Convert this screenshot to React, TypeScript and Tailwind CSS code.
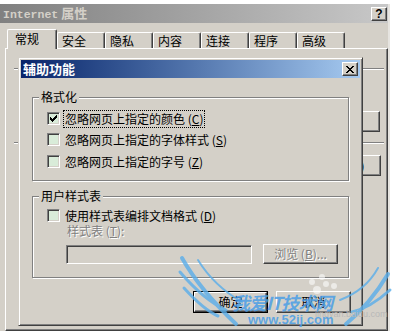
import React from "react";

// classic 3D frames
const RAISED =
  "border border-t-white border-l-white border-r-[#404040] border-b-[#404040] shadow-[inset_-1px_-1px_#808080]";
const SUNKEN =
  "border border-t-[#808080] border-l-[#808080] border-r-white border-b-white shadow-[inset_1px_1px_#404040,inset_-1px_-1px_#d4d0c8]";
const ETCHED = "border border-[#808080] shadow-[inset_1px_1px_#fff,1px_1px_#fff]";
const DISABLED = "text-[#808080] [text-shadow:1px_1px_0_#fff]";

const CHECK = ["......#", ".....##", "#...###", "##.###.", "#####..", ".###...", "..#...."];

function CheckBox({ checked }: { checked?: boolean }) {
  return (
    <span className={`flex h-[13px] w-[13px] shrink-0 items-center justify-center bg-[#d9ecd9] ${SUNKEN}`}>
      {checked && (
        <svg width="7" height="7" viewBox="0 0 7 7" shapeRendering="crispEdges">
          {CHECK.flatMap((row, y) =>
            row.split("").map((c, x) =>
              c === "#" ? <rect key={`${x}-${y}`} x={x} y={y} width="1" height="1" fill="#000" /> : null,
            ),
          )}
        </svg>
      )}
    </span>
  );
}

function Key({ k }: { k: string }) {
  return (
    <>
      (<span className="underline underline-offset-[1px]">{k}</span>)
    </>
  );
}

function Row({ checked, focus, children, className = "" }: { checked?: boolean; focus?: boolean; children: React.ReactNode; className?: string }) {
  return (
    <div className={`flex h-[13px] items-center gap-[5px] ${className}`}>
      <CheckBox checked={checked} />
      <span
        className={`whitespace-nowrap leading-[14px] ${focus ? "outline-1 outline-dotted outline-black outline-offset-[1px]" : ""}`}
      >
        {children}
      </span>
    </div>
  );
}

function Group({ label, className, children }: { label: string; className: string; children: React.ReactNode }) {
  return (
    <div className={`relative ${ETCHED} ${className}`}>
      <span className="absolute -top-[8px] left-[6px] bg-[#d4d0c8] px-[2px] leading-[14px]">{label}</span>
      {children}
    </div>
  );
}

function Watermark() {
  return (
    <div className="pointer-events-none absolute left-[170px] top-[250px] h-[84px] w-[226px]">
      <svg width="226" height="84" viewBox="0 0 226 84" className="absolute left-0 top-0 opacity-80">
        <g fill="none" stroke="#5aaeea" strokeLinecap="round">
          <path d="M12 8 Q30 40 66 74" strokeWidth="4" />
          <path d="M10 22 Q34 50 56 60" strokeWidth="3" />
          <path d="M14 38 Q34 60 48 66" strokeWidth="3" />
          <path d="M28 10 Q44 36 72 52" strokeWidth="2" />
          <path d="M218 24 Q200 54 176 74" strokeWidth="4" />
          <path d="M220 40 Q200 58 182 62" strokeWidth="3" />
          <path d="M208 18 Q196 40 170 50" strokeWidth="2" />
        </g>
        <g fill="#ffffff" opacity="0.7">
          <circle cx="147" cy="40" r="4" />
          <circle cx="156" cy="34" r="3" />
          <circle cx="164" cy="36" r="3" />
          <circle cx="142" cy="32" r="3" />
          <circle cx="152" cy="27" r="3" />
        </g>
      </svg>
      <span className="absolute left-[62px] top-[41px] whitespace-nowrap text-[18px] font-bold italic leading-[22px] tracking-[-1px] text-[#4a9ee6]/85">
        我爱IT技术网
      </span>
      <span className="absolute left-[145px] top-[59px] whitespace-nowrap font-['Liberation_Sans',sans-serif] text-[9px] leading-[10px] text-[#b8b8b8]">
        jingyan.baidu.com
      </span>
      <span className="absolute left-[78px] top-[63px] whitespace-nowrap font-['Liberation_Sans',sans-serif] text-[13px] font-bold leading-[14px] text-[#4a9ee6]/85">
        www.52ij.com
      </span>
    </div>
  );
}

function Dialog() {
  return (
    <div
      className={`absolute left-[18px] top-[57px] flex h-[269px] w-[345px] flex-col border border-t-[#d4d0c8] border-l-[#d4d0c8] border-r-[#404040] border-b-[#404040] bg-[#d4d0c8] p-[2px] shadow-[inset_1px_1px_#fff,inset_-1px_-1px_#808080]`}
    >
      <div className="flex h-[18px] shrink-0 items-center justify-between bg-linear-to-r from-[#0a246a] to-[#a6caf0] pl-[2px] pr-[2px]">
        <span className="text-[13px] font-bold leading-[14px] text-white">辅助功能</span>
        <span className={`flex h-[14px] w-[16px] items-center justify-center bg-[#d4d0c8] ${RAISED}`}>
          <svg width="8" height="7" viewBox="0 0 8 7" shapeRendering="crispEdges">
            <path d="M0 0h2v1h-2zM6 0h2v1h-2zM1 1h2v1h-2zM5 1h2v1h-2zM2 2h4v1h-4zM3 3h2v1h-2zM2 4h4v1h-4zM1 5h2v1h-2zM5 5h2v1h-2zM0 6h2v1h-2zM6 6h2v1h-2z" fill="#000" />
          </svg>
        </span>
      </div>

      <div className="flex flex-col px-[11px] pt-[19px]">
        <Group label="格式化" className="h-[84px] pl-[14px] pt-[14px]">
          <Row checked focus>
            忽略网页上指定的颜色 <Key k="C" />
          </Row>
          <Row className="mt-[8px]">
            忽略网页上指定的字体样式 <Key k="S" />
          </Row>
          <Row className="mt-[9px]">
            忽略网页上指定的字号 <Key k="Z" />
          </Row>
        </Group>

        <Group label="用户样式表" className="mt-[15px] h-[82px] pl-[14px] pt-[12px]">
          <Row>
            使用样式表编排文档格式 <Key k="D" />
          </Row>
          <div className={`mt-[2px] pl-[20px] leading-[14px] ${DISABLED}`}>
            样式表 <Key k="T" />:
          </div>
          <div className="mt-[6px] flex items-start pl-[19px]">
            <div className={`mt-[1px] h-[19px] w-[186px] bg-[#d4d0c8] ${SUNKEN}`} />
            <div className={`ml-[11px] flex h-[20px] w-[75px] items-center justify-center leading-[14px] ${RAISED} ${DISABLED}`}>
              浏览 <Key k="B" />...
            </div>
          </div>
        </Group>

        <div className="-mr-[2px] mt-[13px] flex justify-end gap-[8px]">
          <div className="h-[22px] w-[75px] border border-black">
            <div className={`flex h-full w-full items-center justify-center leading-[14px] ${RAISED}`}>确定</div>
          </div>
          <div className={`flex h-[22px] w-[75px] items-center justify-center leading-[14px] ${RAISED}`}>取消</div>
        </div>
      </div>
    </div>
  );
}

const TABS = ["安全", "隐私", "内容", "连接", "程序", "高级"];

export default function App() {
  return (
    <div className="relative h-[334px] w-[396px] overflow-hidden bg-white font-['Noto_Sans_CJK_SC',sans-serif] text-[12px] text-black">
      <div className="pt-[4px]">
        <div className="h-[327px] w-[390px] border-r-2 border-r-[#e6e4e0] bg-[#d4d0c8]">
          {/* title bar */}
          <div className="flex h-[19px] items-center justify-between bg-linear-to-r from-[#808080] to-[#c8c8c8] pl-[3px] pr-[1px]">
            <span className="whitespace-nowrap text-[13px] font-bold leading-[14px] text-[#d4d0c8]">
              <span className="font-['Liberation_Mono',monospace] text-[11.5px]">Internet</span> 属性
            </span>
            <span className={`flex h-[14px] w-[16px] items-center justify-center bg-[#d4d0c8] font-['Liberation_Sans',sans-serif] text-[12px] font-bold leading-none ${RAISED}`}>
              ?
            </span>
          </div>

          {/* tabs */}
          <div className="mt-[6px] flex h-[19px] items-end pl-[7px]">
            <div className="relative z-10 -mb-[1px] h-[20px] w-[50px] rounded-t-[2px] border-l border-t border-r border-l-white border-t-white border-r-[#404040] bg-[#d4d0c8] pl-[7px] pt-[2px] leading-[14px] shadow-[inset_-1px_0_#808080]">
              常规
            </div>
            {TABS.map((t) => (
              <div
                key={t}
                className="h-[16px] w-[48px] rounded-t-[2px] border-l border-t border-r border-l-white border-t-white border-r-[#404040] pl-[4px] pt-[1px] leading-[14px] shadow-[inset_-1px_0_#808080]"
              >
                {t}
              </div>
            ))}
          </div>

          {/* tab page (mostly hidden under the dialog) */}
          <div className="ml-[5px] flex h-[283px] w-[383px] flex-col border border-t-white border-l-white border-r-[#404040] border-b-[#404040] pl-[8px] pr-[3px] shadow-[inset_-1px_-1px_#808080]">
            <div className="mt-[19px] border-t border-b border-t-[#808080] border-b-white" />
            <div className="mt-[41px] flex justify-end pr-[4px]">
              <div className={`h-[21px] w-[80px] ${RAISED}`} />
            </div>
            <div className="mt-[10px] border-t border-b border-t-[#808080] border-b-white" />
            <div className="mt-[11px] flex justify-end pr-[3px]">
              <div className={`flex h-[21px] w-[72px] items-center justify-center leading-[14px] ${RAISED}`}>
                设置<Key k="S" />
              </div>
            </div>
          </div>
        </div>
      </div>

      <Dialog />
      <Watermark />
    </div>
  );
}
